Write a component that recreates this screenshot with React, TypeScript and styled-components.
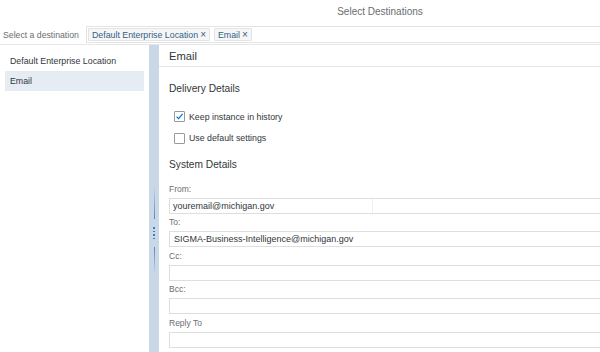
import React from "react";
import styled, { createGlobalStyle } from "styled-components";

const Global = createGlobalStyle`
  html, body { margin: 0; padding: 0; background: #fff; }
  body { font-family: "Liberation Sans", Arial, sans-serif; color: #32363a; }
`;

const Page = styled.div`
  width: 600px;
  height: 352px;
  overflow: hidden;
  display: flex;
  flex-direction: column;
  background: #fff;
`;

const TitleBar = styled.div`
  height: 26px;
  flex: none;
  display: flex;
  align-items: center;
  justify-content: center;
  padding: 0 0 4px 160px;
  box-sizing: border-box;
  font-size: 10px;
  color: #6a6d70;
`;

const TokenRow = styled.div`
  height: 17px;
  flex: none;
  display: flex;
  align-items: stretch;
`;

const TokenLabel = styled.div`
  width: 86px;
  flex: none;
  box-sizing: border-box;
  padding-left: 3px;
  display: flex;
  align-items: center;
  font-size: 8.7px;
  color: #6a6d70;
`;

const TokenField = styled.div`
  flex: 1;
  display: flex;
  align-items: center;
  gap: 4px;
  padding-left: 1px;
  border: 1px solid #e3e3e3;
  border-right: none;
`;

const Token = styled.span`
  height: 13px;
  box-sizing: border-box;
  display: inline-flex;
  align-items: center;
  gap: 2px;
  padding: 0 3px;
  border: 1px solid #e4e4e4;
  border-radius: 1px;
  background: #f6f6f6;
  color: #346187;
  font-size: 8.8px;
`;

const TokenX = styled.span`
  font-size: 10px;
  line-height: 1;
`;

const Body = styled.div`
  flex: 1;
  display: flex;
  margin-top: 1px;
  border-top: 1px solid #e6e6e6;
  min-height: 0;
`;

const LeftList = styled.div`
  width: 149px;
  flex: none;
  padding-top: 6px;
  box-sizing: border-box;
`;

const ListItem = styled.div<{ $selected?: boolean }>`
  height: 20px;
  margin: 0 5px;
  padding-left: 5px;
  display: flex;
  align-items: center;
  font-size: 8.8px;
  color: #32363a;
  background: ${(p) => (p.$selected ? "#e5ecf4" : "transparent")};
`;

const Splitter = styled.div`
  width: 10px;
  flex: none;
  background: #c9d8e7;
  display: flex;
  flex-direction: column;
  align-items: center;
  padding-top: 141px;
  box-sizing: border-box;
`;

const SplitLine = styled.div<{ $up?: boolean }>`
  width: 1px;
  height: ${(p) => (p.$up ? 33 : 28)}px;
  background: linear-gradient(
    ${(p) => (p.$up ? "to bottom" : "to top")},
    rgba(70, 120, 180, 0),
    rgba(70, 120, 180, 0.85)
  );
`;

const Grip = styled.div`
  margin: 8px 0;
  display: flex;
  flex-direction: column;
  gap: 2px;
`;

const Dot = styled.span`
  width: 1.5px;
  height: 1.5px;
  background: #4a7bb5;
`;

const RightPanel = styled.div`
  flex: 1;
  min-width: 0;
  display: flex;
  flex-direction: column;
`;

const PanelHeader = styled.div`
  height: 21px;
  flex: none;
  border-bottom: 1px solid #e6e6e6;
  display: flex;
  align-items: center;
  padding-left: 10px;
  font-size: 11.2px;
  color: #32363a;
`;

const Content = styled.div`
  padding: 15px 0 0 10px;
  display: flex;
  flex-direction: column;
`;

const SectionTitle = styled.div<{ $top?: number; $bottom?: number }>`
  height: 14px;
  line-height: 14px;
  font-size: 10.2px;
  color: #32363a;
  margin-top: ${(p) => p.$top ?? 0}px;
  margin-bottom: ${(p) => p.$bottom ?? 0}px;
`;

const CheckRow = styled.label`
  height: 21.5px;
  display: flex;
  align-items: center;
  gap: 4px;
  padding-left: 5px;
  font-size: 8.8px;
  color: #32363a;
`;

const Box = styled.span<{ $checked?: boolean }>`
  width: 11px;
  height: 11px;
  box-sizing: border-box;
  border: 1px solid ${(p) => (p.$checked ? "#8d9aa8" : "#9a9a9a")};
  border-radius: 1px;
  background: #fff;
  display: inline-flex;
  align-items: center;
  justify-content: center;
`;

const FieldLabel = styled.div`
  height: 17.5px;
  display: flex;
  align-items: center;
  font-size: 8.5px;
  color: #6a6d70;
`;

const Input = styled.div`
  height: 16px;
  box-sizing: border-box;
  border: 1px solid #dedede;
  border-right: none;
  display: flex;
  align-items: center;
  font-size: 9px;
  color: #32363a;
`;

const InputText = styled.span<{ $filled?: boolean }>`
  align-self: stretch;
  display: flex;
  align-items: center;
  padding-left: ${(p) => (p.$filled ? 3 : 4)}px;
  width: ${(p) => (p.$filled ? "203px" : "auto")};
  box-sizing: border-box;
  border-right: ${(p) => (p.$filled ? "1px solid #f0f0f0" : "none")};
  background: #fff;
`;

const Check = () => (
  <svg width="9" height="9" viewBox="0 0 9 9">
    <path d="M1.6 4.6 L3.6 6.6 L7.6 1.8" fill="none" stroke="#0a6ed1" strokeWidth="1.2" />
  </svg>
);

const fields: { label: string; value?: string; filled?: boolean }[] = [
  { label: "From:", value: "youremail@michigan.gov", filled: true },
  { label: "To:", value: "SIGMA-Business-Intelligence@michigan.gov" },
  { label: "Cc:" },
  { label: "Bcc:" },
  { label: "Reply To" },
  { label: "Subject:" },
];

export default function App() {
  return (
    <>
      <Global />
      <Page>
        <TitleBar>Select Destinations</TitleBar>
        <TokenRow>
          <TokenLabel>Select a destination</TokenLabel>
          <TokenField>
            <Token>
              Default Enterprise Location <TokenX>×</TokenX>
            </Token>
            <Token>
              Email <TokenX>×</TokenX>
            </Token>
          </TokenField>
        </TokenRow>
        <Body>
          <LeftList>
            <ListItem>Default Enterprise Location</ListItem>
            <ListItem $selected>Email</ListItem>
          </LeftList>
          <Splitter>
            <SplitLine $up />
            <Grip>
              <Dot />
              <Dot />
              <Dot />
              <Dot />
            </Grip>
            <SplitLine />
          </Splitter>
          <RightPanel>
            <PanelHeader>Email</PanelHeader>
            <Content>
              <SectionTitle $bottom={10}>Delivery Details</SectionTitle>
              <CheckRow>
                <Box $checked>
                  <Check />
                </Box>
                Keep instance in history
              </CheckRow>
              <CheckRow>
                <Box />
                Use default settings
              </CheckRow>
              <SectionTitle $top={9} $bottom={8}>
                System Details
              </SectionTitle>
              {fields.map((f) => (
                <React.Fragment key={f.label}>
                  <FieldLabel>{f.label}</FieldLabel>
                  <Input>
                    <InputText $filled={f.filled}>{f.value ?? ""}</InputText>
                  </Input>
                </React.Fragment>
              ))}
            </Content>
          </RightPanel>
        </Body>
      </Page>
    </>
  );
}
